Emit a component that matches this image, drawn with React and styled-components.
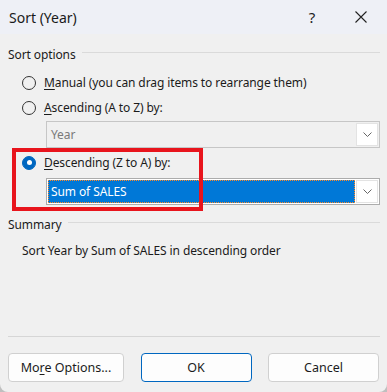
import React from "react"
import styled, { createGlobalStyle } from "styled-components"

const Global = createGlobalStyle`
  html, body { margin: 0; padding: 0; background: #bfbfbf; }
  body { font-family: "Noto Sans", "Open Sans", Arial, sans-serif; }
`

const Dialog = styled.div`
  position: relative;
  width: 387px;
  height: 392px;
  background: #f0f0f0;
  display: flex;
  flex-direction: column;
  border-radius: 0 0 8px 8px;
  overflow: hidden;
  color: #1b1b1b;
  font-size: 12px;
  letter-spacing: -0.1px;
`

const TitleBar = styled.div`
  height: 34px;
  flex: none;
  display: flex;
  align-items: center;
  background: #eef0f6;
  padding-left: 9px;
`

const Title = styled.div`
  flex: 1;
  font-size: 14px;
  letter-spacing: 0;
  color: #1a1a1a;
`

const TitleButton = styled.div`
  width: ${({ $w }) => $w}px;
  height: 34px;
  display: flex;
  align-items: center;
  justify-content: center;
  font-size: 15px;
  color: #222;
`

const Body = styled.div`
  flex: 1;
  display: flex;
  flex-direction: column;
  padding: 12px 7px 0 8px;
`

const GroupHeader = styled.div`
  display: flex;
  align-items: center;
  gap: 6px;
  height: 16px;
  margin-top: ${({ $mt }) => $mt || 0}px;
  &::after {
    content: "";
    flex: 1;
    border-top: 1px solid #dadada;
    margin-top: -3px;
  }
`

const RadioRow = styled.div`
  display: flex;
  align-items: center;
  height: 25px;
  padding-left: 14px;
  gap: 8px;
  margin-top: ${({ $mt }) => $mt || 0}px;
`

const Radio = styled.span`
  width: 12px;
  height: 12px;
  border-radius: 50%;
  box-sizing: content-box;
  border: 1px solid #333;
  background: ${({ $checked }) => ($checked ? "#0067c0" : "transparent")};
  border-color: ${({ $checked }) => ($checked ? "#0067c0" : "#333")};
  display: flex;
  align-items: center;
  justify-content: center;
  &::after {
    content: "";
    width: 5px;
    height: 5px;
    border-radius: 50%;
    background: ${({ $checked }) => ($checked ? "#fff" : "transparent")};
  }
`

const Key = styled.u`
  text-decoration-thickness: 1px;
  text-underline-offset: 2px;
`

const Combo = styled.div`
  margin-left: 38px;
  height: 27px;
  box-sizing: border-box;
  display: flex;
  align-items: stretch;
  border: 1px solid ${({ $disabled }) => ($disabled ? "#c6c6c6" : "#acacac")};
  background: ${({ $disabled }) => ($disabled ? "#f0f0f0" : "#fff")};
  padding: 1px;
  margin-top: ${({ $mt }) => $mt || 0}px;
`

const ComboValue = styled.div`
  flex: 1;
  display: flex;
  align-items: center;
  padding-left: 3px;
  color: ${({ $selected, $disabled }) => ($selected ? "#fff" : $disabled ? "#7a7a7a" : "#000")};
  background: ${({ $selected }) => ($selected ? "#0078d7" : "transparent")};
  outline: ${({ $selected }) => ($selected ? "1px dotted #ff8a28" : "none")};
  outline-offset: -1px;
  margin-right: 1px;
`

const DropButton = styled.div`
  width: 20px;
  background: #fff;
  border: 1px solid #e3e3e3;
  display: flex;
  align-items: center;
  justify-content: center;
`

const Summary = styled.div`
  padding-left: 14px;
  margin-top: 10px;
`

const Separator = styled.div`
  margin-top: auto;
  border-top: 1px solid #d6d6d6;
`

const ButtonRow = styled.div`
  display: flex;
  justify-content: space-between;
  padding: 16px 1px 10px 0;
`

const Button = styled.button`
  width: ${({ $w }) => $w}px;
  height: 29px;
  border-radius: 4px;
  background: #fdfdfd;
  border: 1px solid ${({ $primary }) => ($primary ? "#0067c0" : "#d0d0d0")};
  font-family: inherit;
  font-size: 12.5px;
  color: #1b1b1b;
  padding: 0;
`

const Annotation = styled.div`
  position: absolute;
  left: 12px;
  top: 148px;
  width: 191px;
  height: 63px;
  box-sizing: border-box;
  border: 4px solid #e8141c;
  pointer-events: none;
`

const Chevron = () => (
  <svg width="9" height="5" viewBox="0 0 9 5">
    <path d="M0.5 0.5 L4.5 4.5 L8.5 0.5" fill="none" stroke="#666" strokeWidth="1" />
  </svg>
)

const CloseIcon = () => (
  <svg width="12" height="12" viewBox="0 0 12 12">
    <path d="M0.5 0.5 L11.5 11.5 M11.5 0.5 L0.5 11.5" stroke="#222" strokeWidth="1.1" />
  </svg>
)

export default function App() {
  return (
    <>
      <Global />
      <Dialog>
        <TitleBar>
          <Title>Sort (Year)</Title>
          <TitleButton $w={46}>?</TitleButton>
          <TitleButton $w={52}>
            <CloseIcon />
          </TitleButton>
        </TitleBar>
        <Body>
          <GroupHeader>Sort options</GroupHeader>
          <RadioRow $mt={8}>
            <Radio />
            <span>
              <Key>M</Key>anual (you can drag items to rearrange them)
            </span>
          </RadioRow>
          <RadioRow>
            <Radio />
            <span>
              <Key>A</Key>scending (A to Z) by:
            </span>
          </RadioRow>
          <Combo $disabled $mt={1}>
            <ComboValue $disabled>Year</ComboValue>
            <DropButton>
              <Chevron />
            </DropButton>
          </Combo>
          <RadioRow $mt={2}>
            <Radio $checked />
            <span>
              <Key>D</Key>escending (Z to A) by:
            </span>
          </RadioRow>
          <Combo $mt={3}>
            <ComboValue $selected>Sum of SALES</ComboValue>
            <DropButton>
              <Chevron />
            </DropButton>
          </Combo>
          <GroupHeader $mt={11}>Summary</GroupHeader>
          <Summary>Sort Year by Sum of SALES in descending order</Summary>
          <Separator />
          <ButtonRow>
            <Button $w={116}>
              Mo<Key>r</Key>e Options...
            </Button>
            <Button $w={111} $primary>
              OK
            </Button>
            <Button $w={111}>Cancel</Button>
          </ButtonRow>
        </Body>
        <Annotation />
      </Dialog>
    </>
  )
}
